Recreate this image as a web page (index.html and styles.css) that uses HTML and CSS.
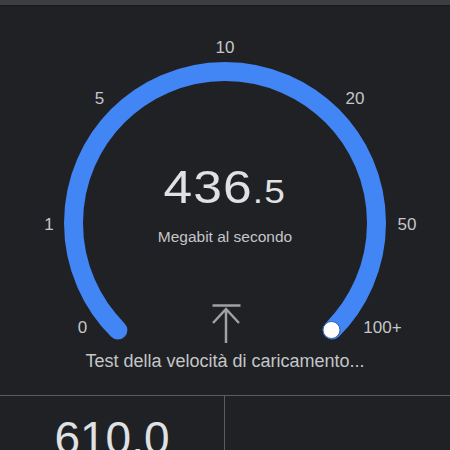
FILE: index.html
```html
<!DOCTYPE html>
<html lang="it">
<head>
  <meta charset="UTF-8">
  <title>Test velocità</title>
  <link rel="stylesheet" href="styles.css">
</head>
<body>

  <div class="topbar"></div>

  <section class="gauge">
    <svg class="dial" width="450" height="389" viewBox="0 6 450 389">
      <path class="arc" d="M 117.9 330.1 A 151.5 151.5 0 1 1 332.1 330.1"></path>
      <circle class="knob" cx="331.5" cy="330" r="8.5"></circle>
      <text class="tick" x="225" y="47">10</text>
      <text class="tick" x="99.5" y="98.5">5</text>
      <text class="tick" x="355" y="98.5">20</text>
      <text class="tick" x="49" y="224">1</text>
      <text class="tick" x="407" y="224">50</text>
      <text class="tick" x="82.5" y="327.5">0</text>
      <text class="tick" x="382.5" y="327.5">100+</text>
    </svg>

    <div class="readout">
      <div class="speed">436<span class="decimal">.5</span></div>
      <div class="unit">Megabit al secondo</div>
      <svg class="upload-icon" width="30" height="40" viewBox="0 0 30 40">
        <path d="M1.5 1.5 H29.5 M15 5 V39 M2 19 L15 5 L28 19"></path>
      </svg>
      <div class="status">Test della velocità di caricamento...</div>
    </div>
  </section>

  <section class="stats">
    <div class="stat">610.0</div>
    <div class="stat"></div>
  </section>

</body>
</html>
```

FILE: styles.css
```css
* { box-sizing: border-box; }

body {
  margin: 0;
  width: 450px;
  height: 450px;
  overflow: hidden;
  background: #202124;
  color: #c4c6c9;
  font-family: 'Liberation Sans', Arial, sans-serif;
}

.topbar {
  height: 6px;
  background: #3c3e41;
  border-bottom: 1px solid #18191b;
}

.gauge {
  position: relative;
  height: 389px;
}

.dial {
  position: absolute;
  top: 0;
  left: 0;
}

.arc {
  fill: none;
  stroke: #4285f4;
  stroke-width: 19;
  stroke-linecap: round;
}

.knob {
  fill: #ffffff;
  stroke: #2f5fb0;
  stroke-width: 1;
}

.tick {
  fill: #c4c6c9;
  font-size: 17px;
  text-anchor: middle;
  dominant-baseline: central;
}

.readout {
  position: relative;
  display: flex;
  flex-direction: column;
  align-items: center;
  padding-top: 158px;
}

/* the original face is wider than Arial */
.speed {
  font-size: 46px;
  line-height: 1;
  letter-spacing: 1px;
  color: #dfe1e4;
  transform: scaleX(1.12);
}

.decimal {
  font-size: 33px;
}

.unit {
  margin-top: 19px;
  font-size: 15.5px;
  line-height: 1;
}

.upload-icon {
  margin-top: 59px;
  margin-left: 2px;
}

.upload-icon path {
  fill: none;
  stroke: #9fa1a4;
  stroke-width: 2.5;
}

.status {
  margin-top: 8px;
  font-size: 18px;
  line-height: 1;
}

.stats {
  display: grid;
  grid-template-columns: 1fr 1fr;
  height: 55px;
  border-top: 1px solid #5a5c60;
}

.stat {
  padding-top: 19px;
  text-align: center;
  font-size: 46px;
  line-height: 1;
  color: #dfe1e4;
}

.stat:first-child { border-right: 1px solid #5a5c60; }
```
